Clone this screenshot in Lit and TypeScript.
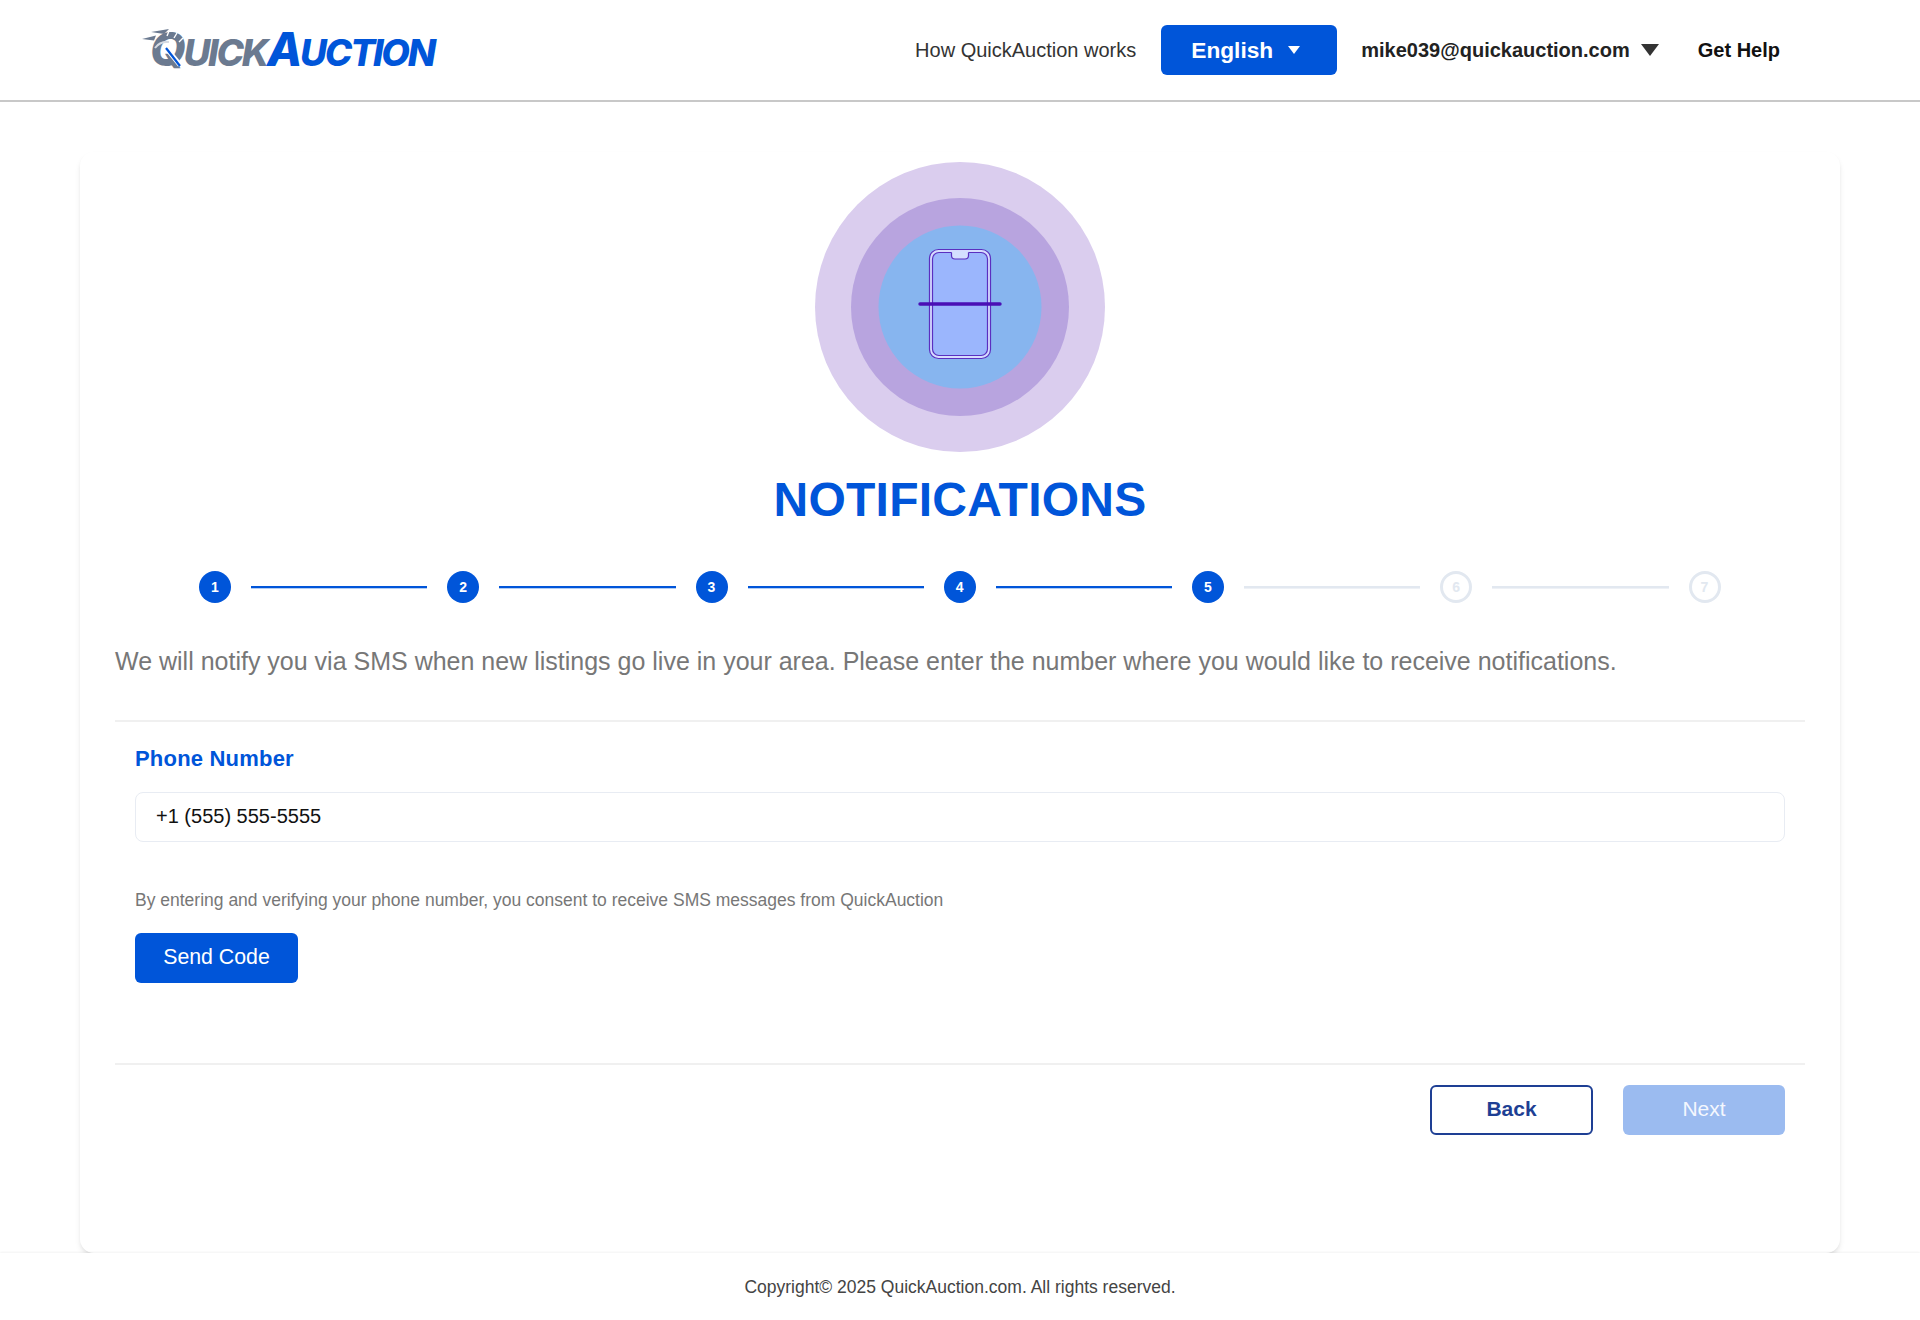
import {LitElement, html, css} from 'lit';
import {customElement} from 'lit/decorators.js';
import {classMap} from 'lit/directives/class-map.js';

const STEPS = [1, 2, 3, 4, 5, 6, 7];
const CURRENT_STEP = 5;

@customElement('app-root')
export class AppRoot extends LitElement {
  static styles = css`
    :host {
      display: flex;
      flex-direction: column;
      height: 1320px;
      background: #fff;
      font-family: 'Liberation Sans', Arial, sans-serif;
      color: #333;
    }

    /* header */
    .header {
      flex: none;
      height: 100px;
      box-sizing: content-box;
      border-bottom: 2px solid #c8c8c8;
      display: flex;
      align-items: center;
      justify-content: space-between;
      padding: 0 140px 0 142px;
    }
    .logo {
      position: relative;
      display: flex;
      align-items: baseline;
      margin-top: 2px;
      padding-left: 8px;
      font-family: Inter, 'Liberation Sans', sans-serif;
      font-style: italic;
      font-weight: 800;
      font-size: 37px;
      line-height: 46px;
      letter-spacing: -2.2px;
      white-space: nowrap;
    }
    .logo-grey {
      color: #6b7a90;
    }
    .logo-blue {
      color: #0055d9;
    }
    .logo-big {
      font-size: 46px;
    }
    .logo-mark {
      position: absolute;
      left: 0;
      top: -3px;
    }
    .nav {
      display: flex;
      align-items: center;
      font-size: 20px;
    }
    .how {
      color: #333;
    }
    .lang {
      display: flex;
      align-items: center;
      gap: 15px;
      box-sizing: border-box;
      width: 176px;
      height: 50px;
      margin: 0 24px 0 25px;
      padding-left: 30px;
      border-radius: 6px;
      background: #0055d9;
      color: #fff;
      font-weight: 700;
      font-size: 22.7px;
    }
    .lang-arrow {
      width: 0;
      height: 0;
      border-left: 6.5px solid transparent;
      border-right: 6.5px solid transparent;
      border-top: 8px solid #fff;
    }
    .user {
      font-weight: 700;
      color: #222;
    }
    .user-arrow {
      width: 0;
      height: 0;
      margin-left: 11px;
      border-left: 9px solid transparent;
      border-right: 9px solid transparent;
      border-top: 12px solid #333;
    }
    .help {
      margin-left: 39px;
      font-weight: 700;
      color: #111;
    }

    /* card */
    .main {
      flex: 1;
      min-height: 0;
      display: flex;
      padding: 50px 80px 0;
      background: #fff;
    }
    .card {
      flex: 1;
      box-sizing: border-box;
      padding: 10px 35px 0;
      background: #fff;
      border-radius: 14px;
      box-shadow: 0 4px 6px -1px rgba(0, 0, 0, 0.1), 0 2px 4px -2px rgba(0, 0, 0, 0.1);
    }
    .hero {
      display: block;
      margin: 0 auto;
    }
    h1 {
      margin: 19px 0 0;
      text-align: center;
      font-size: 48px;
      line-height: 58px;
      letter-spacing: 0.25px;
      font-weight: 700;
      color: #0055d9;
    }

    /* stepper */
    .stepper {
      display: flex;
      align-items: center;
      margin: 42px 84.5px 0 84px;
    }
    .dot {
      flex: none;
      box-sizing: border-box;
      width: 32px;
      height: 32px;
      border-radius: 50%;
      display: flex;
      align-items: center;
      justify-content: center;
      font-size: 14px;
      font-weight: 700;
      background: #0055d9;
      color: #fff;
    }
    .dot.todo {
      background: #fff;
      border: 3px solid #e2e8f0;
      color: #e2e8f0;
    }
    .line {
      flex: 1;
      height: 2px;
      margin: 0 20px;
      background: #0055d9;
      box-shadow: 0 1px 0 rgba(0, 85, 217, 0.3);
    }
    .line.todo {
      background: #e2e8f0;
      box-shadow: 0 1px 0 rgba(226, 232, 240, 0.6);
    }

    .intro {
      margin: 43px 0 0;
      font-size: 25px;
      line-height: 30px;
      color: #777;
    }
    .rule {
      height: 2px;
      background: #f0f0f0;
    }
    .rule.top {
      margin-top: 44px;
    }
    .rule.bottom {
      margin-top: 80px;
    }
    .form {
      padding: 0 20px;
    }
    label {
      display: block;
      margin-top: 24px;
      font-size: 22px;
      line-height: 26px;
      font-weight: 700;
      letter-spacing: 0.2px;
      color: #0055d9;
    }
    .field {
      margin-top: 20px;
      height: 50px;
      box-sizing: border-box;
      display: flex;
      align-items: center;
      padding: 0 20px 2px;
      border: 1px solid #e8ecf3;
      border-radius: 8px;
      font-size: 20px;
      color: #111;
    }
    .note {
      margin: 47px 0 0;
      font-size: 17.5px;
      line-height: 22px;
      color: #777;
    }
    button {
      box-sizing: border-box;
      width: 163px;
      height: 50px;
      padding: 0 0 2px;
      border: none;
      border-radius: 6px;
      font-family: inherit;
      font-size: 21px;
      cursor: pointer;
    }
    .send {
      display: block;
      margin-top: 22px;
      background: #0055d9;
      color: #fff;
      font-size: 21.3px;
    }
    .actions {
      display: flex;
      justify-content: flex-end;
      gap: 30px;
      margin-top: 20px;
      padding: 0 20px;
    }
    .back {
      background: #fff;
      border: 2px solid #1e3f94;
      color: #1e3f94;
      font-weight: 700;
    }
    .next {
      width: 162px;
      background: #9bbbf0;
      color: #f4f7fe;
    }

    .footer {
      flex: none;
      position: relative;
      height: 67px;
      display: flex;
      align-items: center;
      justify-content: center;
      padding-top: 1px;
      box-sizing: border-box;
      background: #fff;
      box-shadow: 0 -1px 2px rgba(0, 0, 0, 0.05);
      font-size: 17.5px;
      color: #444;
    }
  `;

  private renderStepper() {
    return html`
      <div class="stepper">
        ${STEPS.map(
          (n, i) => html`
            <div class=${classMap({dot: true, todo: n > CURRENT_STEP})}>${n}</div>
            ${i < STEPS.length - 1
              ? html`<div class=${classMap({line: true, todo: n >= CURRENT_STEP})}></div>`
              : ''}
          `
        )}
      </div>
    `;
  }

  render() {
    return html`
      <header class="header">
        <div class="logo">
          <span class="logo-grey logo-big">Q</span><span class="logo-grey">UICK</span
          ><span class="logo-blue logo-big">A</span><span class="logo-blue">UCTION</span>
          <svg class="logo-mark" width="50" height="52" viewBox="0 0 50 52">
            <!-- speed lines -->
            <path d="M0 16 L14 12.5 L12 17.5 Z M9 9 L27 6 L22 11 Z" fill="#6b7a90" />
            <!-- gauge ticks on the Q -->
            <path d="M27 8 L25 13 M35 10 L32 15 M41 15 L37 19" stroke="#fff" stroke-width="1.4" />
            <path d="M13 25 Q18 18 27 19" fill="none" stroke="#d5dae2" stroke-width="2" />
            <!-- needle -->
            <path d="M25 26 L38 42" stroke="#fff" stroke-width="5" />
            <path d="M24 25 L38 43" stroke="#0055d9" stroke-width="2.2" />
          </svg>
        </div>
        <nav class="nav">
          <span class="how">How QuickAuction works</span>
          <div class="lang">English <span class="lang-arrow"></span></div>
          <span class="user">mike039@quickauction.com</span>
          <span class="user-arrow"></span>
          <span class="help">Get Help</span>
        </nav>
      </header>

      <main class="main">
        <section class="card">
          <svg class="hero" width="290" height="290" viewBox="0 0 290 290">
            <circle cx="145" cy="145" r="145" fill="#dacdee" />
            <circle cx="145" cy="145" r="109" fill="#b8a4df" />
            <circle cx="145" cy="145" r="81.5" fill="#87b5ef" />
            <rect x="114.5" y="87.5" width="61" height="109" rx="9" fill="#d6dcff" stroke="#5b2fc0" stroke-width="1.2" />
            <rect x="117.5" y="90.5" width="55" height="103" rx="6.5" fill="#9bb6fd" stroke="#5b2fc0" stroke-width="1.2" />
            <path d="M136.5 89 H153.5 V93.5 Q153.5 97 150 97 H140 Q136.5 97 136.5 93.5 Z" fill="#d4e0ff" />
            <path d="M136.5 90.5 V93.5 Q136.5 97 140 97 H150 Q153.5 97 153.5 93.5 V90.5" fill="none" stroke="#5b2fc0" stroke-width="1.2" />
            <line x1="105" y1="142" x2="185" y2="142" stroke="#4a0fb5" stroke-width="3.4" stroke-linecap="round" />
          </svg>
          <h1>NOTIFICATIONS</h1>
          ${this.renderStepper()}
          <p class="intro">
            We will notify you via SMS when new listings go live in your area. Please enter the number where you would like to receive notifications.
          </p>
          <div class="rule top"></div>
          <div class="form">
            <label>Phone Number</label>
            <div class="field">+1 (555) 555-5555</div>
            <p class="note">
              By entering and verifying your phone number, you consent to receive SMS messages from QuickAuction
            </p>
            <button class="send">Send Code</button>
          </div>
          <div class="rule bottom"></div>
          <div class="actions">
            <button class="back">Back</button>
            <button class="next">Next</button>
          </div>
        </section>
      </main>

      <footer class="footer">Copyright© 2025 QuickAuction.com. All rights reserved.</footer>
    `;
  }
}
